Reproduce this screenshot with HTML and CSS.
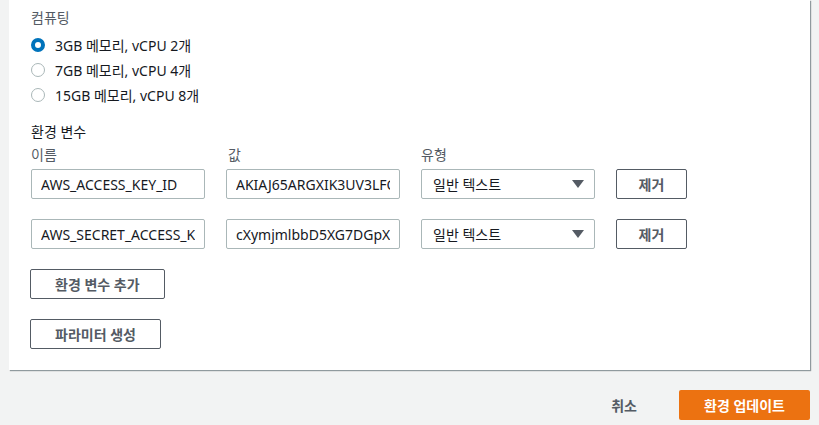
FILE: index.html
```html
<!DOCTYPE html>
<html lang="ko">

<head>
    <meta charset="UTF-8">
    <title>환경 편집</title>
    <link rel="stylesheet" href="styles.css">
</head>

<body>
    <!-- 편집 패널 -->
    <div class="panel">
        <div class="field-label">컴퓨팅</div>
        <div class="radio-list">
            <label class="radio-row"><input type="radio" name="compute" checked><span>3GB 메모리, vCPU 2개</span></label>
            <label class="radio-row"><input type="radio" name="compute"><span>7GB 메모리, vCPU 4개</span></label>
            <label class="radio-row"><input type="radio" name="compute"><span>15GB 메모리, vCPU 8개</span></label>
        </div>

        <div class="field-label env-title">환경 변수</div>
        <div class="env-grid">
            <div class="col-label">이름</div>
            <div class="col-label">값</div>
            <div class="col-label">유형</div>
            <div></div>

            <input class="text-input" type="text" value="AWS_ACCESS_KEY_ID">
            <input class="text-input" type="text" value="AKIAJ65ARGXIK3UV3LFQ">
            <div class="select">
                <span>일반 텍스트</span>
                <span class="caret"></span>
            </div>
            <button class="btn">제거</button>

            <input class="text-input" type="text" value="AWS_SECRET_ACCESS_KEY">
            <input class="text-input" type="text" value="cXymjmlbbD5XG7DGpX...">
            <div class="select">
                <span>일반 텍스트</span>
                <span class="caret"></span>
            </div>
            <button class="btn">제거</button>
        </div>

        <div class="actions">
            <button class="btn btn-wide">환경 변수 추가</button>
            <button class="btn btn-wide">파라미터 생성</button>
        </div>
    </div>

    <!-- 하단 버튼 -->
    <div class="footer">
        <button class="btn-link">취소</button>
        <button class="btn-primary">환경 업데이트</button>
    </div>
</body>

</html>
```

FILE: styles.css
```css
/* 기본 */
body {
    margin: 0;
    background-color: #f2f3f3;
    font-family: "Noto Sans", "Noto Sans CJK KR", sans-serif;
    font-size: 14px;
    color: #16191f;
}

/* 흰색 패널 */
.panel {
    width: 779px;
    margin-left: 9px;
    padding: 8px 0 21px 22px;
    background-color: #ffffff;
    box-shadow: 1px 1px 1px 0 rgba(0, 28, 36, 0.3), 1px 1px 1px 0 rgba(0, 28, 36, 0.15);
}

.field-label {
    line-height: 20px;
    color: #545b64;
}

.env-title {
    margin-top: 15px;
    color: #16191f;
}

/* 라디오 */
.radio-list {
    margin-top: 4px;
}

.radio-row {
    display: flex;
    align-items: center;
    height: 25px;
}

.radio-row input {
    appearance: none;
    width: 14px;
    height: 14px;
    margin: 0 10px 0 0;
    border: 1px solid #aab7b8;
    border-radius: 50%;
    background: #ffffff;
    box-sizing: border-box;
}

.radio-row input:checked {
    border: 4px solid #0073bb;
}

/* 환경 변수 표 */
.env-grid {
    display: grid;
    grid-template-columns: 174px 174px 174px 71px;
    column-gap: 21px;
    row-gap: 20px;
    margin-top: 3px;
}

.col-label {
    line-height: 20px;
    color: #545b64;
    margin-bottom: -16px;
}

.col-label:nth-child(2) {
    padding-left: 2px;
}

.text-input {
    height: 30px;
    box-sizing: border-box;
    padding: 0 9px;
    border: 1px solid #aab7b8;
    border-radius: 2px;
    font-family: inherit;
    font-size: 14px;
    color: #16191f;
    min-width: 0;
}

.select {
    display: flex;
    align-items: center;
    justify-content: space-between;
    height: 30px;
    box-sizing: border-box;
    padding: 0 10px 0 11px;
    border: 1px solid #aab7b8;
    border-radius: 2px;
}

.caret {
    width: 0;
    height: 0;
    border-left: 6px solid transparent;
    border-right: 6px solid transparent;
    border-top: 8px solid #545b64;
}

/* 버튼 */
.btn {
    height: 30px;
    border: 1px solid #545b64;
    border-radius: 2px;
    background: #ffffff;
    font-family: inherit;
    font-size: 14px;
    font-weight: 700;
    color: #545b64;
    padding: 0;
}

.actions {
    display: flex;
    flex-direction: column;
    align-items: flex-start;
    gap: 20px;
    margin-top: 20px;
}

.btn-wide {
    padding: 0 24px;
    margin-left: -1px;
}

/* 하단 */
.footer {
    display: flex;
    justify-content: flex-end;
    align-items: center;
    width: 810px;
    margin-top: 20px;
}

.btn-link {
    border: none;
    background: none;
    font-family: inherit;
    font-size: 14px;
    font-weight: 700;
    color: #545b64;
    padding: 0 20px;
    margin-right: 22px;
}

.btn-primary {
    width: 131px;
    height: 30px;
    border: none;
    border-radius: 2px;
    background-color: #ec7211;
    font-family: inherit;
    font-size: 14px;
    font-weight: 700;
    color: #ffffff;
}
```
